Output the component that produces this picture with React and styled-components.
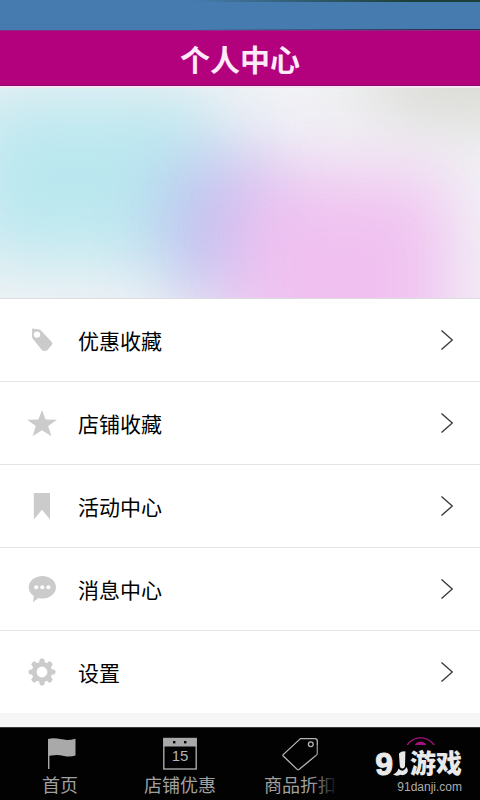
import React from 'react';
import styled, { createGlobalStyle } from 'styled-components';

const GlobalStyle = createGlobalStyle`
  * {
    box-sizing: border-box;
  }

  body {
    margin: 0;
    background: #f6f6f6;
    font-family: 'Liberation Sans', 'Noto Sans CJK SC', sans-serif;
  }
`;

const Page = styled.div`
  display: flex;
  flex-direction: column;
  min-height: 100vh;
`;

const StatusBar = styled.div`
  height: 30px;
  background:
    linear-gradient(90deg, transparent 40%, #1d4038 85%) top / 100% 2px no-repeat,
    linear-gradient(90deg, transparent 40%, #2f2848 95%) bottom / 100% 1px no-repeat,
    #457bae;
`;

const Header = styled.header`
  display: flex;
  align-items: center;
  justify-content: center;
  height: 56px;
  background: #b3007d;
  border-top: 1px solid #8c2a88;
  border-bottom: 1px solid #8c0f68;
`;

const Title = styled.h1`
  margin: 0;
  color: #fdeafa;
  font-family: 'Noto Sans CJK SC', sans-serif;
  font-size: 30px;
  font-weight: 700;
  line-height: 40px;
`;

const Banner = styled.div`
  height: 213px;
  border-top: 2px solid #fbe3f6;
  border-bottom: 1px solid #dddde0;
`;

const BannerArt = styled.svg`
  display: block;
  width: 100%;
  height: 100%;
  background: #f2f3f6;
`;

const Menu = styled.ul`
  margin: 0;
  padding: 0;
  list-style: none;
  background: #fff;
`;

const MenuItem = styled.li`
  border-bottom: 1px solid #e4e4e4;

  &:last-child {
    border-bottom-color: #f6f6f6;
  }
`;

const MenuLink = styled.a`
  display: flex;
  align-items: center;
  gap: 21px;
  height: 82px;
  padding: 0 27px;
  color: #000;
  text-decoration: none;
`;

const MenuIcon = styled.svg`
  flex: none;
  width: 30px;
  height: 30px;
  fill: #cbcbcb;
`;

const MenuLabel = styled.span`
  flex: 1;
  font-family: 'Noto Sans CJK SC', sans-serif;
  font-size: 21px;
  line-height: 30px;
`;

const Chevron = styled.svg`
  flex: none;
  width: 12px;
  height: 20px;
  fill: none;
  stroke: #3c3c3c;
  stroke-width: 1.4;
`;

const TabBar = styled.nav`
  position: relative;
  display: flex;
  height: 73px;
  margin-top: auto;
  background: #020202;
  border-top: 1px solid #3a3a3a;
`;

const Tab = styled.a`
  display: flex;
  flex: 1;
  flex-direction: column;
  align-items: center;
  gap: 1px;
  padding-top: 9px;
  color: ${(props) => (props.$active ? '#a3127f' : '#a0a0a0')};
  text-decoration: none;
`;

const TabIcon = styled.svg`
  flex: none;
  width: 36px;
  height: 34px;
`;

const TabLabel = styled.span`
  font-family: 'Noto Sans CJK SC', sans-serif;
  font-size: 18px;
  line-height: 24px;
  white-space: nowrap;
`;

const Watermark = styled.div`
  position: absolute;
  right: 0;
  bottom: 0;
  display: flex;
  flex-direction: column;
  align-items: flex-end;
  width: 168px;
  height: 55px;
  padding: 4px 18px 0 0;
  background: linear-gradient(90deg, rgba(2, 2, 2, 0) 0, #020202 26px);
`;

const Brand = styled.div`
  display: flex;
  align-items: center;
  height: 30px;
  color: #e9e9e9;
  font-family: 'Liberation Sans', 'Noto Sans CJK SC', sans-serif;
  font-size: 26px;
  font-weight: 900;
  line-height: 30px;
`;

const BrandNumber = styled.span`
  font-size: 32px;
  -webkit-text-stroke: 1px #e9e9e9;
`;

const BrandMark = styled.svg`
  width: 17px;
  height: 26px;
  fill: #e9e9e9;
`;

const Site = styled.div`
  margin-top: 1px;
  color: #adadad;
  font-size: 12px;
  line-height: 14px;
`;

const menu = [
  {
    label: '优惠收藏',
    icon: (
      <path
        fillRule="evenodd"
        d="M5.2 3.4 12.4 4.6 14.5 6 25 17.3Q25.8 18.6 25 19.8L20.3 25.2Q18.8 26.4 16.2 25.8L14.8 25 5.6 13.6 5 11.5ZM10 6.4a3.2 3.2 0 1 0 0 6.4 3.2 3.2 0 0 0 0-6.4Z"
      />
    ),
  },
  {
    label: '店铺收藏',
    icon: <path d="M15 2 18.6 11.6 30 11.8 21.2 18 24.4 28.3 15 22.2 5.6 28.3 8.8 18 0 11.8 11.4 11.6Z" />,
  },
  {
    label: '活动中心',
    icon: <path d="M6.8 2H23V28.4L15 18.8 6.8 28.4Z" />,
  },
  {
    label: '消息中心',
    icon: (
      <>
        <path d="M15.4 2C23 2 29 7 29 13.2S23 24.5 15.4 24.5Q13.4 24.5 11.6 24L6 28.2 6.8 22C3.6 20 1.7 16.9 1.7 13.2 1.7 7 7.8 2 15.4 2Z" />
        <g fill="#fff">
          <circle cx="9.2" cy="13.3" r="2" />
          <circle cx="15.3" cy="13.3" r="2" />
          <circle cx="21.4" cy="13.3" r="2" />
        </g>
      </>
    ),
  },
  {
    label: '设置',
    icon: (
      <>
        {[0, 45, 90, 135, 180, 225, 270, 315].map((angle) => (
          <rect key={angle} x="12.4" y="1.6" width="5.2" height="7" rx="1.8" transform={`rotate(${angle} 15 15)`} />
        ))}
        <circle cx="15" cy="15" r="7.8" fill="none" stroke="#cbcbcb" strokeWidth="4.8" />
      </>
    ),
  },
];

const BannerGlow = () => (
  <BannerArt viewBox="0 0 480 210" preserveAspectRatio="none" aria-hidden="true">
    <defs>
      <filter
        id="glow"
        filterUnits="userSpaceOnUse"
        x="-240"
        y="-240"
        width="960"
        height="760"
        colorInterpolationFilters="sRGB"
      >
        <feGaussianBlur stdDeviation="36" />
      </filter>
    </defs>
    <ellipse cx="470" cy="-10" rx="110" ry="40" fill="#d4d5cd" filter="url(#glow)" />
    <rect x="-40" y="4" width="260" height="172" rx="40" fill="#bae7ef" filter="url(#glow)" />
    <rect x="164" y="70" width="120" height="140" rx="40" fill="#b8bdf0" filter="url(#glow)" opacity="0.9" />
    <rect x="226" y="84" width="226" height="280" rx="30" fill="#f0bcf0" filter="url(#glow)" opacity="0.9" />
  </BannerArt>
);

const FlagIcon = () => (
  <TabIcon viewBox="0 0 36 34" aria-hidden="true">
    <path d="M6 2Q10 .6 15 1.5T25 3Q29 3 33.5 1.8V18.6Q28 20.4 22 19T12 18.2L7.4 18.7V32H6Z" fill="#a9a9a9" />
  </TabIcon>
);

const CalendarIcon = () => (
  <TabIcon viewBox="0 0 36 34" aria-hidden="true">
    <rect x="1.8" y="1.5" width="32.4" height="30.5" fill="none" stroke="#a9a9a9" strokeWidth="1.4" />
    <path d="M1.5 1H34.5V9.5H1.5Z" fill="#a9a9a9" />
    <rect x="11" y="4" width="2.4" height="2.4" fill="#020202" />
    <rect x="22" y="4" width="2.4" height="2.4" fill="#020202" />
    <text x="18" y="24" fill="#b4b4b4" fontFamily="Liberation Sans, sans-serif" fontSize="15" textAnchor="middle">
      15
    </text>
  </TabIcon>
);

const TagIcon = () => (
  <TabIcon viewBox="0 0 36 34" fill="none" stroke="#b4b4b4" strokeWidth="1.3" aria-hidden="true">
    <path d="M19 1.7H33Q35.3 1.7 35.3 4V16.3Q35.3 17.2 34.5 18L17 32.5Q16 33.2 15.2 32.4L1.2 19Q.6 18.3 1.2 17.6L17.6 2.4Q18.2 1.7 19 1.7Z" />
    <circle cx="28.8" cy="7.2" r="2.4" />
  </TabIcon>
);

const ProfileIcon = () => (
  <TabIcon viewBox="0 0 36 34" aria-hidden="true">
    <circle cx="18.6" cy="16.8" r="16" fill="none" stroke="currentColor" strokeWidth="1.3" />
    <circle cx="18.6" cy="11" r="6.6" fill="currentColor" />
  </TabIcon>
);

function App() {
  return (
    <>
      <GlobalStyle />
      <Page>
        <StatusBar />
        <Header>
          <Title>个人中心</Title>
        </Header>
        <main>
          <Banner>
            <BannerGlow />
          </Banner>
          <Menu>
            {menu.map(({ label, icon }) => (
              <MenuItem key={label}>
                <MenuLink href="#">
                  <MenuIcon viewBox="0 0 30 30" aria-hidden="true">
                    {icon}
                  </MenuIcon>
                  <MenuLabel>{label}</MenuLabel>
                  <Chevron viewBox="0 0 12 20" aria-hidden="true">
                    <path d="M.5 .5 11.3 10 .5 19.5" />
                  </Chevron>
                </MenuLink>
              </MenuItem>
            ))}
          </Menu>
        </main>
        <TabBar>
          <Tab href="#">
            <FlagIcon />
            <TabLabel>首页</TabLabel>
          </Tab>
          <Tab href="#">
            <CalendarIcon />
            <TabLabel>店铺优惠</TabLabel>
          </Tab>
          <Tab href="#">
            <TagIcon />
            <TabLabel>商品折扣</TabLabel>
          </Tab>
          <Tab href="#" $active aria-label="个人中心">
            <ProfileIcon />
          </Tab>
          <Watermark>
            <Brand>
              <BrandNumber>9</BrandNumber>
              <BrandMark viewBox="0 0 17 26" aria-hidden="true">
                <path d="M6 2.6Q8 0 12.4 .4L12 15Q11.6 17.6 9.4 17.6 7.2 17.6 6.8 15Z" />
                <path d="M0 23.6Q4 22 5.6 17.6 7 20 10.2 19.6 12.6 18.8 13.2 16 16 19 14 22 11.4 25 7.4 23.8 3.6 25.6 0 23.6Z" />
              </BrandMark>
              <span>游戏</span>
            </Brand>
            <Site>91danji.com</Site>
          </Watermark>
        </TabBar>
      </Page>
    </>
  );
}

export default App;
